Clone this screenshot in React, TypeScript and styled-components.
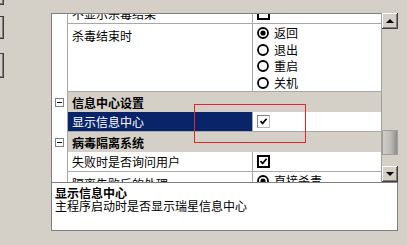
import styled, { createGlobalStyle } from "styled-components";

const GlobalStyle = createGlobalStyle`
  html, body {
    margin: 0;
    padding: 0;
    background: #d4d0c8;
  }
  body {
    font-family: "Noto Sans CJK SC", "DejaVu Sans", sans-serif;
    font-size: 12px;
  }
`;

const Screen = styled.div`
  position: relative;
  width: 407px;
  height: 245px;
  display: flex;
  overflow: hidden;
  background: #d4d0c8;
  color: #000;
`;

// buttons of the dialog that are mostly off screen on the left
const StubColumn = styled.div`
  width: 4px;
  margin-right: 47px;
  flex-shrink: 0;
  display: flex;
  flex-direction: column;
  overflow: hidden;
`;

const StubButton = styled.div<{ $h: number; $gap: number }>`
  flex-shrink: 0;
  width: 60px;
  height: ${(p) => p.$h}px;
  margin-top: ${(p) => p.$gap}px;
  margin-left: -56px;
  box-sizing: border-box;
  border: 1px solid #404040;
  background: #d4d0c8;
  box-shadow: inset -1px -1px #808080;
`;

const Panel = styled.div`
  margin-top: 13px;
  width: 347px;
  display: flex;
  flex-direction: column;
`;

const GridArea = styled.div`
  display: flex;
  height: 169px;
`;

const GridList = styled.div`
  width: 331px;
  box-sizing: border-box;
  border: 1px solid #808080;
  border-bottom: none;
  border-right-color: #a0a0a0;
  background: #fff;
  overflow: hidden;
`;

const Rows = styled.div`
  margin-top: -10px;
`;

const Row = styled.div<{ $h?: number }>`
  display: grid;
  grid-template-columns: 16px 184px 1fr;
  height: ${(p) => p.$h ?? 20}px;
`;

const MarginCell = styled.div`
  box-sizing: border-box;
  border-right: 1px solid #a8a8a8;
  display: flex;
  align-items: center;
  justify-content: center;
`;

const MinusBox = styled.div`
  width: 9px;
  height: 9px;
  box-sizing: border-box;
  border: 1px solid #808080;
  background: #fff;
  display: flex;
  align-items: center;
  justify-content: center;
  &::after {
    content: "";
    width: 5px;
    height: 1px;
    background: #000;
  }
`;

const LabelCell = styled.div<{ $selected?: boolean; $top?: boolean }>`
  box-sizing: border-box;
  border-bottom: 1px solid #a8a8a8;
  padding-left: 4px;
  padding-top: ${(p) => (p.$top ? "3px" : "0")};
  display: flex;
  align-items: ${(p) => (p.$top ? "flex-start" : "center")};
  line-height: 17px;
  white-space: nowrap;
  overflow: hidden;
  background: ${(p) => (p.$selected ? "#0a246a" : "#fff")};
  color: ${(p) => (p.$selected ? "#fff" : "#000")};
`;

const ValueCell = styled.div<{ $top?: boolean }>`
  box-sizing: border-box;
  border-left: 1px solid #a8a8a8;
  border-bottom: 1px solid #a8a8a8;
  padding-left: 4px;
  display: flex;
  align-items: ${(p) => (p.$top ? "flex-start" : "center")};
  overflow: hidden;
`;

const CategoryCell = styled.div`
  grid-column: 2 / 4;
  background: #d4d0c8;
  font-weight: 700;
  padding-left: 4px;
  display: flex;
  align-items: center;
  line-height: 17px;
`;

const CheckBox = styled.div<{ $flat?: boolean }>`
  width: 13px;
  height: 13px;
  box-sizing: border-box;
  background: #fff;
  border: ${(p) => (p.$flat ? "1px solid" : "2px solid #000")};
  border-color: ${(p) => (p.$flat ? "#808080 #b8b8b8 #b8b8b8 #808080" : "#000")};
  display: flex;
  align-items: center;
  justify-content: center;
`;

const RadioGroup = styled.div`
  padding-top: 1px;
  display: flex;
  flex-direction: column;
`;

const RadioOption = styled.div`
  height: 16.5px;
  display: flex;
  align-items: center;
  gap: 5px;
  line-height: 16px;
  white-space: nowrap;
`;

const ScrollBar = styled.div`
  width: 16px;
  display: flex;
  flex-direction: column;
  background: #d4d0c8;
`;

const ArrowButton = styled.div<{ $down?: boolean }>`
  height: 16px;
  box-sizing: border-box;
  background: #d4d0c8;
  box-shadow: inset -1px -1px #404040, inset 1px 1px #ffffff,
    inset -2px -2px #808080, inset 2px 2px #d4d0c8;
  display: flex;
  align-items: center;
  justify-content: center;
  &::after {
    content: "";
    border-left: 4px solid transparent;
    border-right: 4px solid transparent;
    ${(p) =>
      p.$down ? "border-top: 4px solid #000;" : "border-bottom: 4px solid #000;"}
  }
`;

const Track = styled.div<{ $h: number }>`
  height: ${(p) => p.$h}px;
`;

const Thumb = styled.div`
  height: 25px;
  box-sizing: border-box;
  border: 1px solid #a09e9a;
  background: linear-gradient(to right, #cfcdc8, #bdbbb6 55%, #8e8c88);
`;

const Description = styled.div`
  height: 49px;
  box-sizing: border-box;
  border: 1px solid #808080;
  background: #fff;
  padding: 3px 3px;
  line-height: 13px;
  white-space: nowrap;
`;

const DescTitle = styled.div`
  font-weight: 700;
`;

const Annotation = styled.div`
  position: absolute;
  left: 194px;
  top: 104px;
  width: 112px;
  height: 39px;
  box-sizing: border-box;
  border: 1px solid #e0282c;
  pointer-events: none;
`;

function Check() {
  return (
    <svg width="9" height="9" viewBox="0 0 9 9">
      <path d="M1.5 4.2 L3.6 6.4 L7.6 1.8" fill="none" stroke="#000" strokeWidth="1.7" />
    </svg>
  );
}

function Radio({ on }: { on?: boolean }) {
  return (
    <svg width="12" height="12" viewBox="0 0 12 12">
      <circle cx="6" cy="6" r="5" fill="#fff" stroke="#000" strokeWidth="1.8" />
      {on && <circle cx="6" cy="6" r="2.6" fill="#000" />}
    </svg>
  );
}

function App() {
  return (
    <Screen>
      <GlobalStyle />
      <StubColumn>
        <StubButton $h={23} $gap={-18} />
        <StubButton $h={23} $gap={11} />
        <StubButton $h={25} $gap={14} />
      </StubColumn>
      <Panel>
        <GridArea>
          <GridList>
            <Rows>
              <Row>
                <MarginCell />
                <LabelCell>不显示杀毒结果</LabelCell>
                <ValueCell>
                  <CheckBox />
                </ValueCell>
              </Row>
              <Row $h={68}>
                <MarginCell />
                <LabelCell $top>杀毒结束时</LabelCell>
                <ValueCell $top>
                  <RadioGroup>
                    <RadioOption><Radio on />返回</RadioOption>
                    <RadioOption><Radio />退出</RadioOption>
                    <RadioOption><Radio />重启</RadioOption>
                    <RadioOption><Radio />关机</RadioOption>
                  </RadioGroup>
                </ValueCell>
              </Row>
              <Row>
                <MarginCell><MinusBox /></MarginCell>
                <CategoryCell>信息中心设置</CategoryCell>
              </Row>
              <Row>
                <MarginCell />
                <LabelCell $selected>显示信息中心</LabelCell>
                <ValueCell>
                  <CheckBox $flat><Check /></CheckBox>
                </ValueCell>
              </Row>
              <Row>
                <MarginCell><MinusBox /></MarginCell>
                <CategoryCell>病毒隔离系统</CategoryCell>
              </Row>
              <Row>
                <MarginCell />
                <LabelCell>失败时是否询问用户</LabelCell>
                <ValueCell>
                  <CheckBox><Check /></CheckBox>
                </ValueCell>
              </Row>
              <Row $h={40}>
                <MarginCell />
                <LabelCell $top>隔离失败后的处理</LabelCell>
                <ValueCell $top>
                  <RadioGroup>
                    <RadioOption><Radio on />直接杀毒</RadioOption>
                    <RadioOption><Radio />忽略</RadioOption>
                  </RadioGroup>
                </ValueCell>
              </Row>
            </Rows>
          </GridList>
          <ScrollBar>
            <ArrowButton />
            <Track $h={101} />
            <Thumb />
            <Track $h={11} />
            <ArrowButton $down />
          </ScrollBar>
        </GridArea>
        <Description>
          <DescTitle>显示信息中心</DescTitle>
          <div>主程序启动时是否显示瑞星信息中心</div>
        </Description>
      </Panel>
      <Annotation />
    </Screen>
  );
}

export default App;
